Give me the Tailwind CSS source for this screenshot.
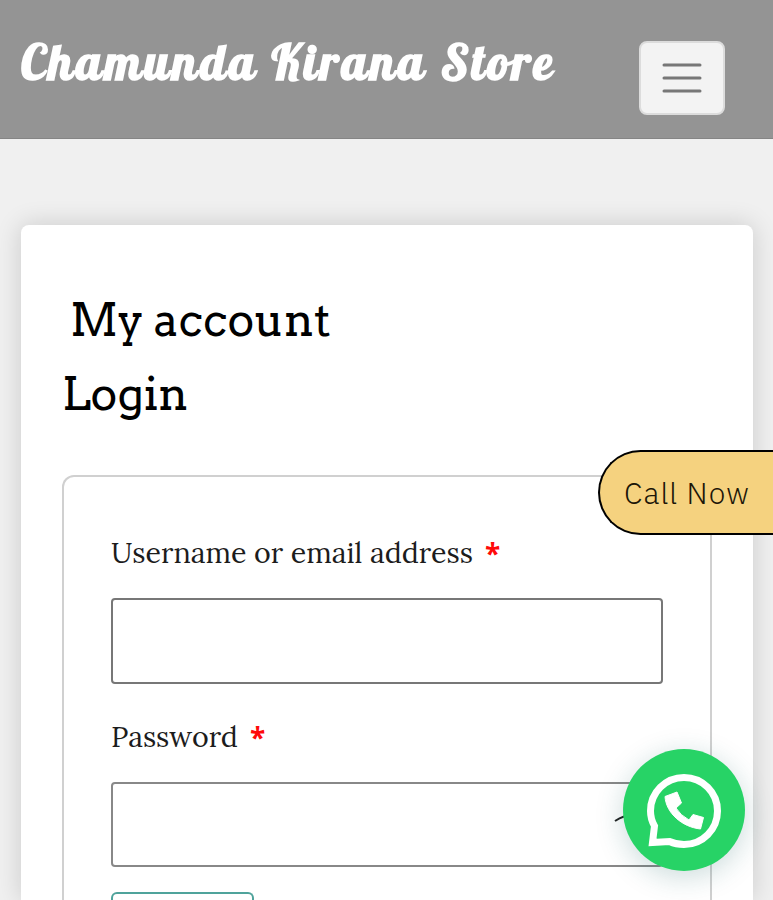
<!DOCTYPE html>
<html lang="en">
<head>
  <meta charset="UTF-8" />
  <meta name="viewport" content="width=device-width, initial-scale=1.0" />
  <title>My account - Chamunda Kirana Store</title>
  <script src="https://cdn.jsdelivr.net/npm/@tailwindcss/browser@4"></script>
</head>
<body class="flex h-screen flex-col overflow-hidden bg-[#f0f0f0] text-black">
  <!-- Header -->
  <header class="flex h-[139px] shrink-0 items-start justify-between border-b border-[#858585] bg-[#949494] pr-12 pl-[21px]">
    <a href="#" class="mt-[27px] font-['Lobster','Liberation_Serif',serif] text-[49px] leading-[70px] font-bold tracking-[3.03px] whitespace-nowrap text-white">Chamunda Kirana Store</a>
    <button aria-label="Menu" class="mt-[41px] flex h-[74px] w-[86px] items-center justify-center rounded-lg border-2 border-[#dcdcdc] bg-[#f3f3f3]">
      <svg class="h-[34px] w-10" viewBox="0 0 40 34" fill="none" stroke="#777" stroke-width="3" stroke-linecap="round">
        <path d="M2 4h36M2 17h36M2 30h36" />
      </svg>
    </button>
  </header>

  <!-- Account card -->
  <main class="mt-[86px] mr-5 ml-[21px] flex min-h-0 flex-1 flex-col rounded-t-lg bg-white px-[41px] pt-[66px] shadow-[0_0_26px_rgba(0,0,0,0.16)]">
    <h1 class="pl-2 font-['Arvo','DejaVu_Serif',serif] text-[45px] leading-[58px]">My account</h1>
    <h2 class="mt-[16px] font-['Arvo','DejaVu_Serif',serif] text-[45px] leading-[58px]">Login</h2>

    <form class="mt-[52px] min-h-0 flex-1 rounded-t-xl border-2 border-b-0 border-[#d0d0d0] px-[47px] pt-[52px]">
      <label for="username" class="flex h-12 items-center gap-3 font-['Lora','Liberation_Serif',serif] text-[28.6px] text-[#1c1c1c]">
        <span>Username or email address</span>
        <span class="font-['Open_Sans',sans-serif] text-[28px] font-bold text-[#ff0a0a]">*</span>
      </label>
      <input id="username" type="text" class="mt-[21px] block h-[86px] w-full rounded border-2 border-[#777] bg-white" />

      <label for="password" class="mt-[29px] flex h-12 items-center gap-3 font-['Lora','Liberation_Serif',serif] text-[28.6px] text-[#1c1c1c]">
        <span>Password</span>
        <span class="font-['Open_Sans',sans-serif] text-[28px] font-bold text-[#ff0a0a]">*</span>
      </label>
      <div class="relative mt-[21px]">
        <input id="password" type="password" class="block h-[85px] w-full rounded border-2 border-[#888] bg-white" />
        <!-- show password -->
        <svg class="absolute top-[21px] right-[10px] h-10 w-10" viewBox="0 0 40 40" fill="none" stroke="#222" stroke-width="2">
          <path d="M2 18Q20 6 38 18" />
        </svg>
      </div>

      <button type="button" aria-label="Log in" class="mt-[25px] block h-2 w-[143px] rounded-t-md border-2 border-b-0 border-[#4fa39b] bg-white"></button>
    </form>
  </main>

  <!-- Call button -->
  <a href="#" class="fixed top-[450px] right-0 flex h-[85px] w-[175px] items-center rounded-l-full border-2 border-r-0 border-black bg-[#f5d27f] pl-6 font-['IBM_Plex_Sans','Fira_Sans','Open_Sans',sans-serif] text-[30px] font-light tracking-[1.1px] whitespace-nowrap text-[#1c1608]">Call Now</a>

  <!-- WhatsApp button -->
  <a href="#" aria-label="WhatsApp" class="fixed top-[749px] right-7 flex size-[122px] items-center justify-center rounded-full bg-[#27d366] shadow-[0_6px_28px_rgba(20,90,90,0.22)]">
    <svg class="size-[76px]" viewBox="0 0 76 76">
      <path d="M6.500 70.500L8.500 54Q4.500 47 4.500 39A33.500 33.500 0 1 1 38 72.500Q30 72.500 23.500 69.500Z" fill="none" stroke="#fff" stroke-width="7" />
      <path d="M19 24.500L31 20L35.500 31L30 36Q34 43 43 48L47 42.500L57.500 45.500L54.500 57C36 55 20 41 19 24.500Z" fill="#fff" stroke="#fff" stroke-width="1" stroke-linejoin="round" />
    </svg>
  </a>
</body>
</html>
